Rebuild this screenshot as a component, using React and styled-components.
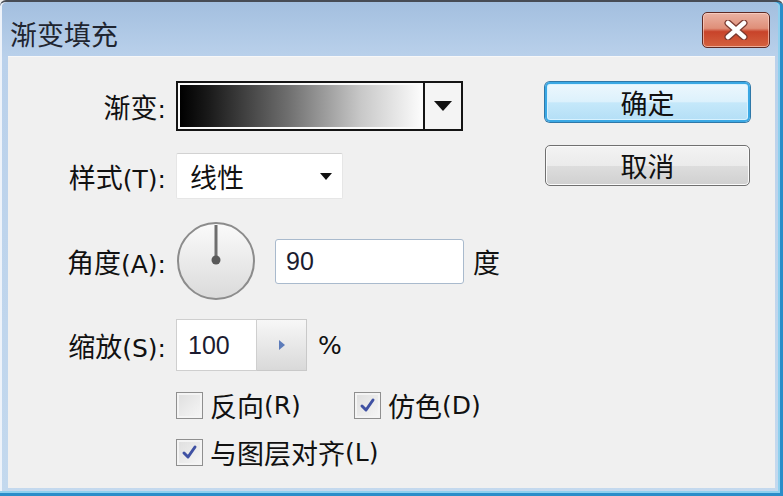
import React from 'react';
import styled, { createGlobalStyle } from 'styled-components';

const Global = createGlobalStyle`
  html, body { margin: 0; padding: 0; width: 783px; height: 496px; overflow: hidden; background: #f0f0f0; }
  #root { width: 783px; height: 496px; }
  * { box-sizing: border-box; }
`;

const CJK = `"Noto Sans CJK SC", "Noto Sans", sans-serif`;
const LATIN = `"Liberation Sans", "Noto Sans CJK SC", sans-serif`;
const WIDE = `"DejaVu Sans", "Noto Sans CJK SC", sans-serif`;

const Window = styled.div`
  width: 783px;
  height: 496px;
  display: flex;
  flex-direction: column;
  background: linear-gradient(#a3bfdf, #bad1eb 56px, #c4d9ee);
  border-top: 2px solid #474c55;
  border-radius: 6px 6px 0 0;
  font-family: ${CJK};
  color: #111;
  box-shadow:
    inset -3px 0 0 #2a8dc9,
    inset 0 -3px 0 #2a8dc9,
    inset -5px 0 0 #8fd0ee,
    inset 0 -5px 0 #8fd0ee,
    inset 2px 0 0 #eef3fa;
`;

const TitleBar = styled.div`
  height: 54px;
  display: flex;
  align-items: center;
  padding-left: 10px;
`;

const TitleText = styled.div`
  font-size: 27px;
  padding-top: 8px;
  color: #1f2530;
`;

const CloseButton = styled.div`
  margin-left: auto;
  margin-right: 13px;
  margin-top: 2px;
  width: 68px;
  height: 36px;
  border: 1px solid #5e2a24;
  border-radius: 5px;
  background: linear-gradient(#eab3a4, #df8f79 45%, #c8432a 55%, #d4623f);
  box-shadow: inset 0 0 0 1px rgba(255, 220, 210, 0.6);
  display: flex;
  align-items: center;
  justify-content: center;
`;

const Client = styled.div`
  flex: 1;
  margin: 0 8px 8px 8px;
  background: #f0f0f0;
  border-top: 1px solid #f8f8f8;
  display: flex;
`;

const Form = styled.div`
  width: 520px;
  display: flex;
  flex-direction: column;
`;

const Row = styled.div`
  display: flex;
  align-items: center;
  height: ${p => p.$h}px;
  margin-top: ${p => p.$mt}px;
  padding-left: ${p => p.$pl || 0}px;
`;

const Label = styled.div`
  width: 158px;
  margin-right: 10px;
  text-align: right;
  font-size: 27px;
  white-space: nowrap;
`;

const Latin = styled.span`
  font-family: ${WIDE};
  font-size: 25px;
`;

const GradientBox = styled.div`
  width: 287px;
  height: 50px;
  border: 2px solid #141414;
  display: flex;
  background: #f4f4f4;
`;

const GradientFill = styled.div`
  flex: 1;
  border: 2px solid #fafafa;
  background: linear-gradient(to right, #000 0%, #1a1a1a 12%, #6f6f6f 45%, #c8c8c8 75%, #fbfbfb 100%);
`;

const GradientArrow = styled.div`
  width: 38px;
  border-left: 2px solid #141414;
  display: flex;
  align-items: center;
  justify-content: center;
`;

const Triangle = styled.div`
  width: 0;
  height: 0;
  border-left: ${p => p.$w / 2}px solid transparent;
  border-right: ${p => p.$w / 2}px solid transparent;
  border-top: ${p => p.$h}px solid ${p => p.$c || '#111'};
`;

const RightTriangle = styled.div`
  width: 0;
  height: 0;
  border-top: 5px solid transparent;
  border-bottom: 5px solid transparent;
  border-left: 6px solid #5d7cba;
`;

const Select = styled.div`
  width: 167px;
  height: 46px;
  background: #fff;
  border: 1px solid #e6e6e6;
  border-top-color: #d2d2d2;
  border-radius: 2px;
  display: flex;
  align-items: center;
  justify-content: space-between;
  padding: 0 10px 0 13px;
  font-size: 27px;
`;

const Dial = styled.svg`
  width: 80px;
  height: 80px;
  display: block;
`;

const TextInput = styled.div`
  width: ${p => p.$w}px;
  height: ${p => p.$h}px;
  margin-left: ${p => p.$ml || 0}px;
  background: #fff;
  border: 1px solid ${p => p.$bc || '#cfcfcf'};
  border-radius: ${p => p.$r || 0}px;
  display: flex;
  align-items: center;
  padding-left: ${p => p.$pl}px;
  font-family: ${LATIN};
  font-size: 25px;
  color: #1b1b30;
`;

const SpinButton = styled.div`
  width: 50px;
  height: 52px;
  border: 1px solid #c9c9c9;
  border-left: none;
  background: linear-gradient(#f7f7f7, #e8e8e8 50%, #d9d9d9);
  display: flex;
  align-items: center;
  justify-content: center;
`;

const Unit = styled.div`
  margin-left: ${p => p.$ml}px;
  font-size: ${p => (p.$latin ? 25 : 27)}px;
  font-family: ${p => (p.$latin ? WIDE : CJK)};
`;

const CheckItem = styled.div`
  display: flex;
  align-items: center;
  width: ${p => (p.$w ? `${p.$w}px` : 'auto')};
  font-size: 27px;
  white-space: nowrap;
`;

const Box = styled.div`
  width: 27px;
  height: 27px;
  flex: none;
  border: 1px solid #8f8f8f;
  background: linear-gradient(135deg, #dedede, #f6f6f6);
  box-shadow: inset 0 0 0 2px #f4f4f4;
  display: flex;
  align-items: center;
  justify-content: center;
  margin-right: 7px;
`;

const Buttons = styled.div`
  margin-left: auto;
  margin-right: 25px;
  padding-top: 25px;
  display: flex;
  flex-direction: column;
  gap: 23px;
`;

const Button = styled.div`
  width: 205px;
  height: ${p => (p.$primary ? 40 : 41)}px;
  border-radius: 5px;
  display: flex;
  align-items: center;
  justify-content: center;
  font-size: 27px;
  color: #111;
  border: ${p => (p.$primary ? '2px solid #3aa8e4' : '1px solid #707070')};
  background: ${p =>
    p.$primary
      ? 'linear-gradient(#ecf7fd, #dcf1fc 50%, #c5e8fa 52%, #b4dff6)'
      : 'linear-gradient(#f3f3f3, #ebebeb 50%, #dddddd 52%, #d0d0d0)'};
  box-shadow: ${p =>
    p.$primary
      ? '0 0 0 1px #2f78a8, inset 0 0 0 1px #d8f2ff'
      : 'inset 0 0 0 1px #fbfbfb'};
`;

const Check = () => (
  <svg width="17" height="17" viewBox="0 0 17 17">
    <path d="M3 9 L7 13 L14 3" fill="none" stroke="#3f51a3" strokeWidth="3" strokeLinecap="round" strokeLinejoin="round" />
  </svg>
);

const CloseIcon = () => (
  <svg width="28" height="20" viewBox="0 0 28 20">
    <path d="M6 3 L22 17 M22 3 L6 17" stroke="#7a3a30" strokeWidth="7" strokeLinecap="round" />
    <path d="M6 3 L22 17 M22 3 L6 17" stroke="#ffffff" strokeWidth="4.5" strokeLinecap="round" />
  </svg>
);

export default function App() {
  return (
    <>
      <Global />
      <Window>
        <TitleBar>
          <TitleText>渐变填充</TitleText>
          <CloseButton>
            <CloseIcon />
          </CloseButton>
        </TitleBar>
        <Client>
          <Form>
            <Row $mt={24} $h={50}>
              <Label>渐变<Latin>:</Latin></Label>
              <GradientBox>
                <GradientFill />
                <GradientArrow>
                  <Triangle $w={18} $h={10} />
                </GradientArrow>
              </GradientBox>
            </Row>
            <Row $mt={22} $h={46}>
              <Label>样式<Latin>(T):</Latin></Label>
              <Select>
                <span>线性</span>
                <Triangle $w={13} $h={7} />
              </Select>
            </Row>
            <Row $mt={23} $h={78}>
              <Label>角度<Latin>(A):</Latin></Label>
              <Dial viewBox="0 0 80 80">
                <defs>
                  <linearGradient id="dialFill" x1="0" y1="0" x2="0" y2="1">
                    <stop offset="0" stopColor="#fbfbfb" />
                    <stop offset="1" stopColor="#dadada" />
                  </linearGradient>
                </defs>
                <circle cx="40" cy="40" r="38" fill="url(#dialFill)" stroke="#8c8c8c" strokeWidth="2" />
                <line x1="40" y1="4" x2="40" y2="38" stroke="#6e6e6e" strokeWidth="3" />
                <circle cx="40" cy="39" r="4.5" fill="#595959" />
              </Dial>
              <TextInput $w={189} $h={45} $ml={19} $pl={10} $bc="#a9bacd" $r={3}>90</TextInput>
              <Unit $ml={9}>度</Unit>
            </Row>
            <Row $mt={19} $h={52}>
              <Label>缩放<Latin>(S):</Latin></Label>
              <TextInput $w={81} $h={52} $pl={11}>100</TextInput>
              <SpinButton>
                <RightTriangle />
              </SpinButton>
              <Unit $ml={11} $latin>%</Unit>
            </Row>
            <Row $mt={21} $h={27} $pl={168}>
              <CheckItem $w={178}>
                <Box />
                反向<Latin>(R)</Latin>
              </CheckItem>
              <CheckItem>
                <Box><Check /></Box>
                仿色<Latin>(D)</Latin>
              </CheckItem>
            </Row>
            <Row $mt={19} $h={28} $pl={168}>
              <CheckItem>
                <Box><Check /></Box>
                与图层对齐<Latin>(L)</Latin>
              </CheckItem>
            </Row>
          </Form>
          <Buttons>
            <Button $primary>确定</Button>
            <Button>取消</Button>
          </Buttons>
        </Client>
      </Window>
    </>
  );
}
